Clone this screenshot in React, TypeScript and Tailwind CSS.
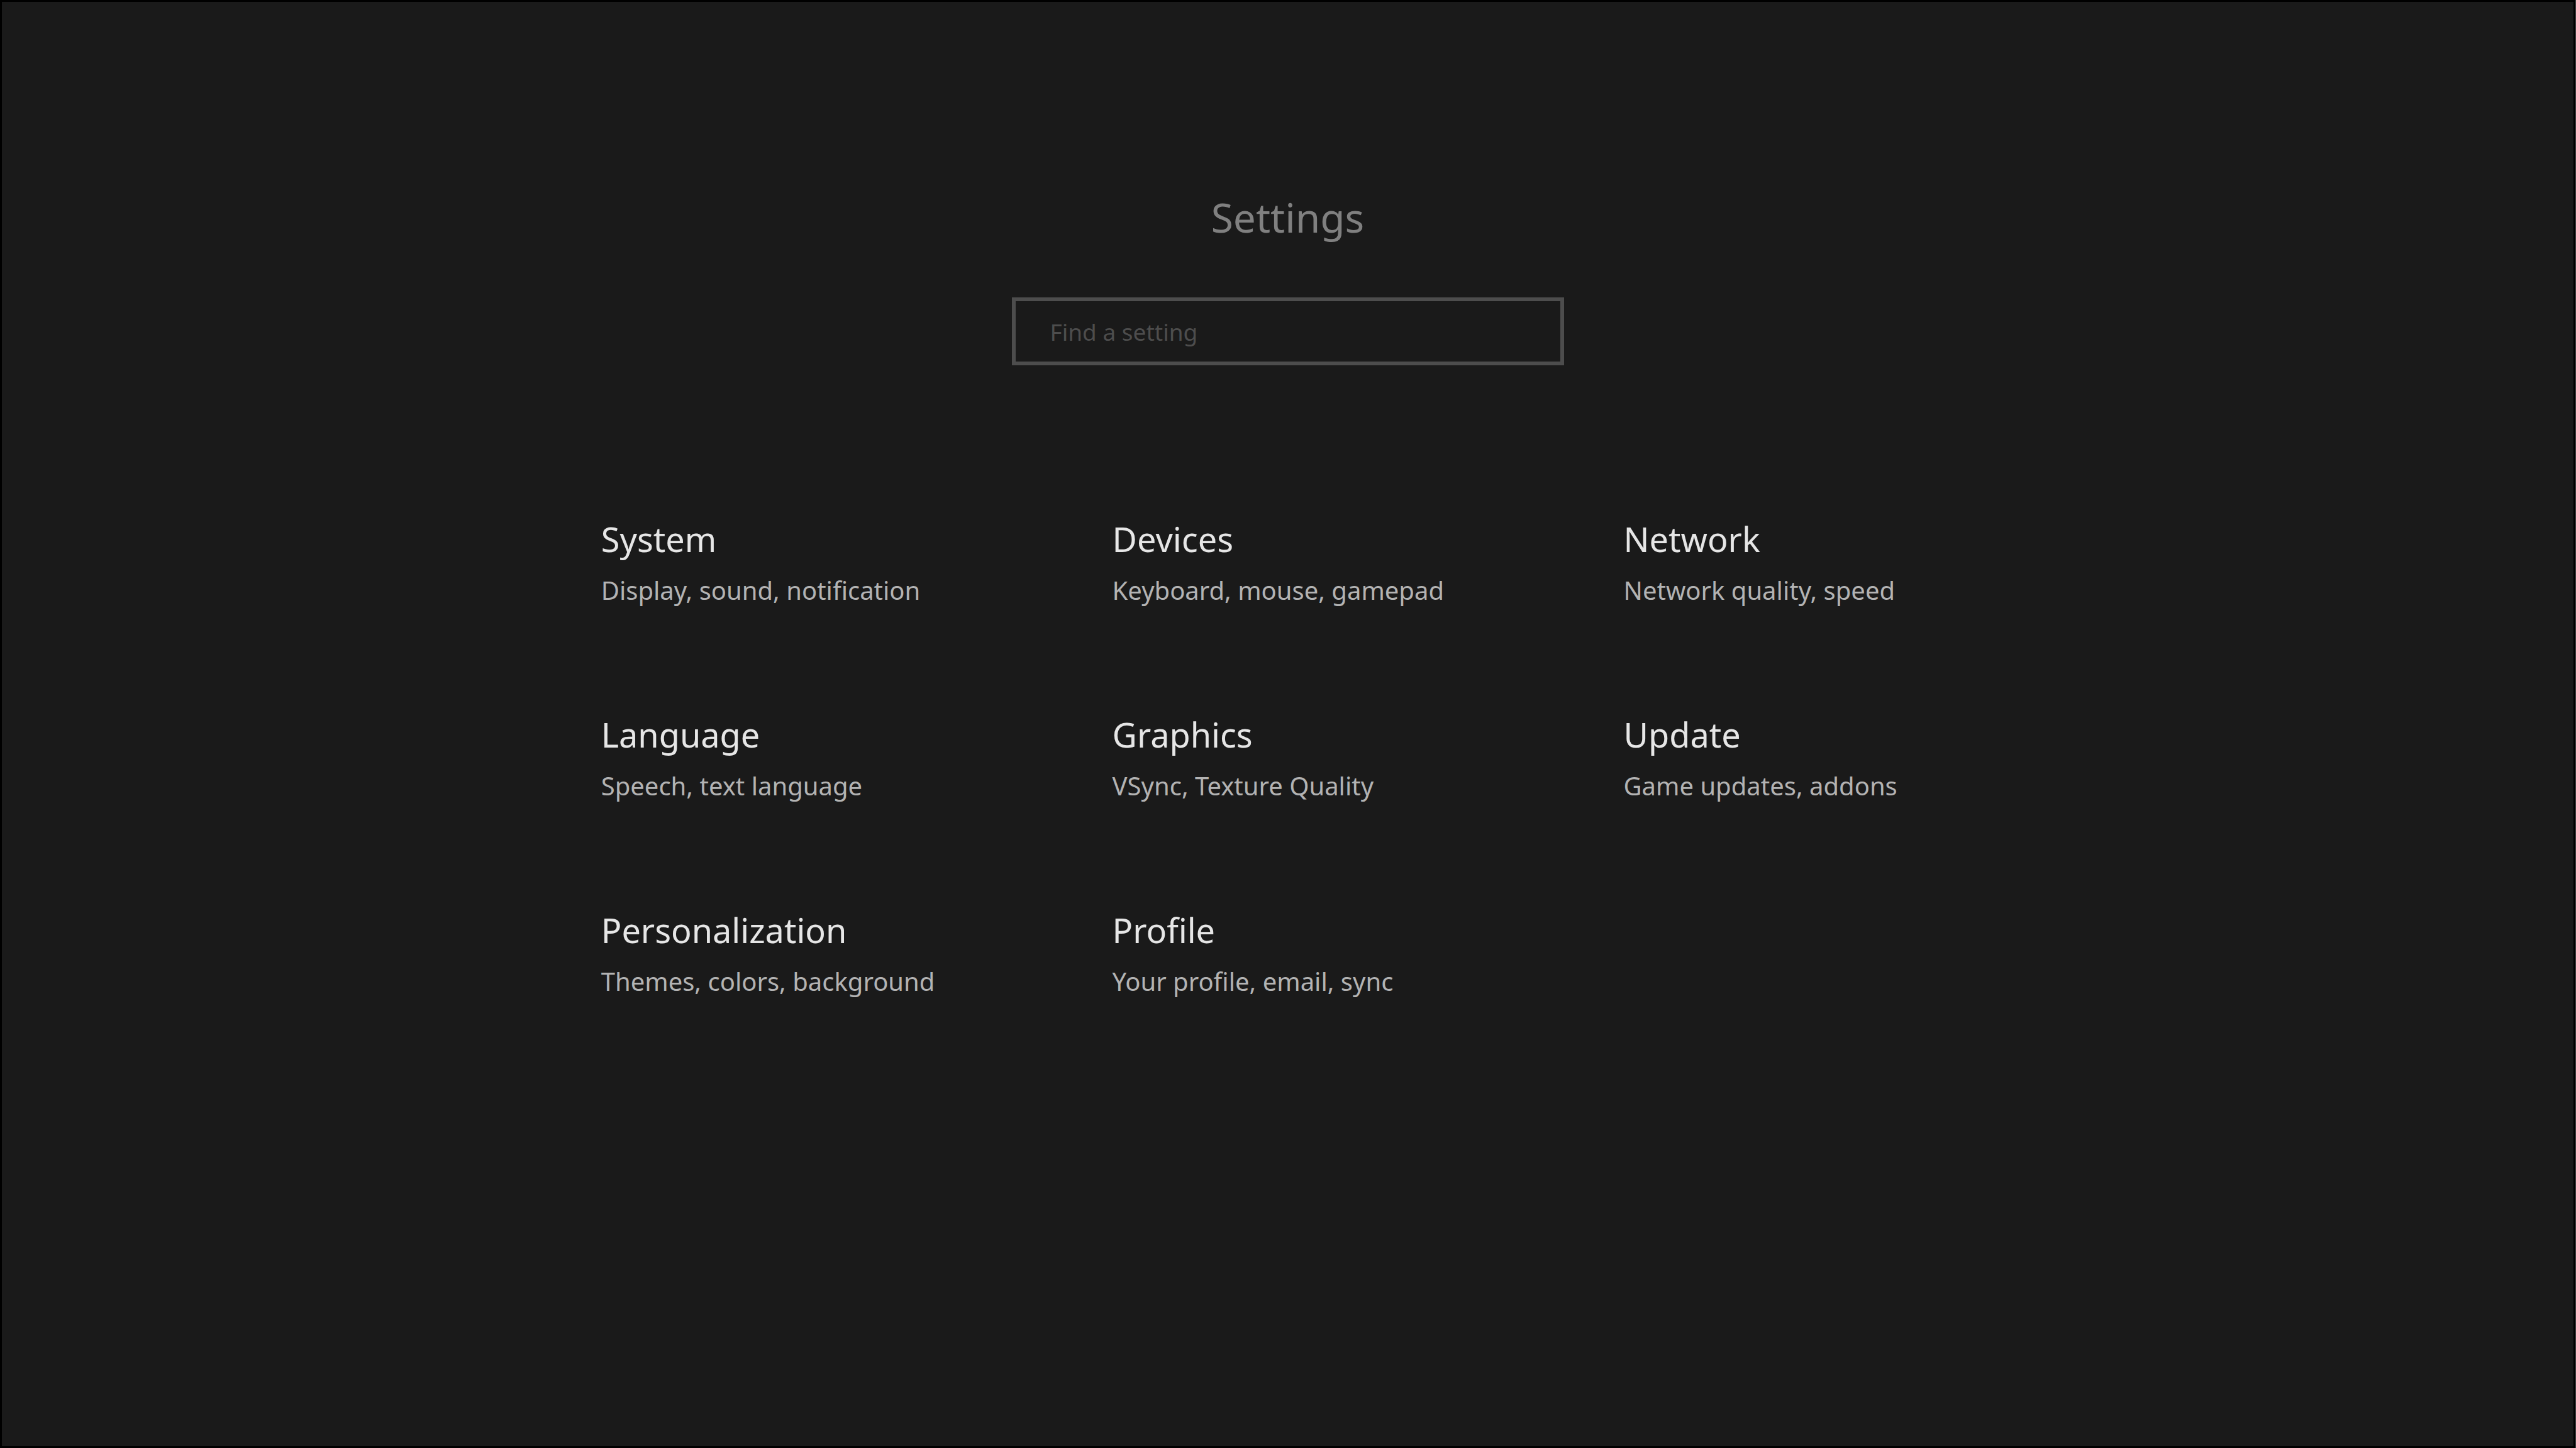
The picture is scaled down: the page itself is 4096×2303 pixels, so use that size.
const categories = [
  { title: "System", detail: "Display, sound, notification" },
  { title: "Devices", detail: "Keyboard, mouse, gamepad" },
  { title: "Network", detail: "Network quality, speed" },
  { title: "Language", detail: "Speech, text language" },
  { title: "Graphics", detail: "VSync, Texture Quality" },
  { title: "Update", detail: "Game updates, addons" },
  { title: "Personalization", detail: "Themes, colors, background" },
  { title: "Profile", detail: "Your profile, email, sync" },
];

function Category({ title, detail }: { title: string; detail: string }) {
  return (
    <a href={"#" + title.toLowerCase()} className="block whitespace-nowrap">
      <h2 className="text-[54px] leading-[64px] text-[#e6e6e6]">{title}</h2>
      <p className="mt-[26px] text-[40px] leading-[48px] text-[#b3b3b3]">{detail}</p>
    </a>
  );
}

export default function App() {
  return (
    <div className="border-r border-[#4d4d4d]">
      <main className="flex min-h-screen flex-col items-center border-[3px] border-black bg-[#1a1a1a] pt-[303px] font-['Noto_Sans',sans-serif]">
        <h1 className="text-[64px] leading-[80px] text-[#808080]">Settings</h1>
        <input
          type="search"
          aria-label="Find a setting"
          placeholder="Find a setting"
          className="mt-[87px] h-[108px] w-[878px] max-w-full appearance-none border-[6px] border-[#4d4d4d] bg-transparent px-[55px] text-[37px] leading-[48px] text-[#b3b3b3] outline-none placeholder:text-[#4d4d4d] placeholder:opacity-100"
        />
        <nav aria-label="Settings categories" className="mt-[244px] w-full pr-[23.2%] pl-[23.3%]">
          <ul className="grid grid-cols-3 gap-x-[251px] gap-y-[173px]">
            {categories.map((c) => (
              <li key={c.title}>
                <Category title={c.title} detail={c.detail} />
              </li>
            ))}
          </ul>
        </nav>
      </main>
    </div>
  );
}
